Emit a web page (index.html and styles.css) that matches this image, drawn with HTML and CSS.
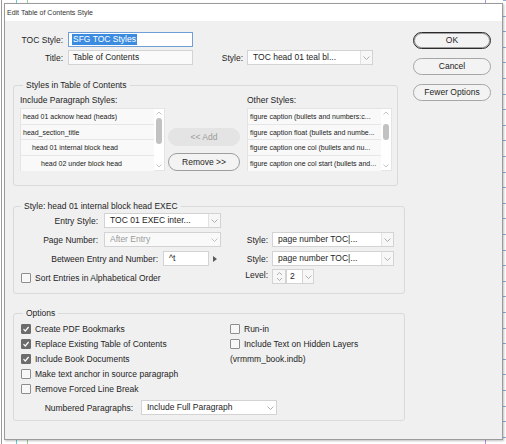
FILE: index.html
```html
<!DOCTYPE html>
<html lang="en">
<head>
  <meta charset="UTF-8">
  <title>Edit Table of Contents Style</title>
  <link rel="stylesheet" href="styles.css">
</head>
<body>
  <div class="dialog">
    <div class="dialog-title">Edit Table of Contents Style</div>
    <div class="dialog-body">
      <div class="main">
        <!-- top fields -->
        <div class="row">
          <span class="lbl lbl-top">TOC Style:</span>
          <div class="field field-focus"><span class="sel">SFG TOC Styles</span></div>
        </div>
        <div class="row row2">
          <span class="lbl lbl-top">Title:</span>
          <div class="field field-title">Table of Contents</div>
          <span class="lbl lbl-style">Style:</span>
          <div class="dd dd-title">
            <span class="dd-text">TOC head 01 teal bl...</span>
            <span class="dd-arrow"><svg width="7" height="4" viewBox="0 0 7 4"><path d="M0.5 0.5L3.5 3.5L6.5 0.5" fill="none" stroke="#9c9c9c" stroke-width="0.8"/></svg></span>
          </div>
        </div>

        <!-- styles in toc -->
        <fieldset class="group group-styles">
          <legend>Styles in Table of Contents</legend>
          <div class="lists">
            <div class="list-col">
              <div class="list-label">Include Paragraph Styles:</div>
              <div class="list">
                <div class="list-items">
                  <div class="item">head 01 acknow head (heads)</div>
                  <div class="item">head_section_title</div>
                  <div class="item indent1">head 01 internal block head</div>
                  <div class="item indent2">head 02 under block head</div>
                </div>
                <div class="scrollbar">
                  <svg class="sb-arrow" width="6" height="4" viewBox="0 0 6 4"><path d="M0.5 3.5L3 1L5.5 3.5" fill="none" stroke="#b5b5b5" stroke-width="0.8"/></svg>
                  <div class="thumb" style="margin-top: 3px; height: 26px;"></div>
                  <div class="sb-space"></div>
                  <svg class="sb-arrow" width="6" height="4" viewBox="0 0 6 4"><path d="M0.5 0.5L3 3L5.5 0.5" fill="none" stroke="#b5b5b5" stroke-width="0.8"/></svg>
                </div>
              </div>
            </div>
            <div class="list-buttons">
              <div class="btn btn-disabled">&lt;&lt; Add</div>
              <div class="btn">Remove &gt;&gt;</div>
            </div>
            <div class="list-col">
              <div class="list-label">Other Styles:</div>
              <div class="list">
                <div class="list-items">
                  <div class="item">figure caption (bullets and numbers:c...</div>
                  <div class="item">figure caption float (bullets and numbe...</div>
                  <div class="item">figure caption one col (bullets and nu...</div>
                  <div class="item">figure caption one col start (bullets and...</div>
                </div>
                <div class="scrollbar">
                  <svg class="sb-arrow" width="6" height="4" viewBox="0 0 6 4"><path d="M0.5 3.5L3 1L5.5 3.5" fill="none" stroke="#b5b5b5" stroke-width="0.8"/></svg>
                  <div class="thumb" style="margin-top: 9px; height: 16px;"></div>
                  <div class="sb-space"></div>
                  <svg class="sb-arrow" width="6" height="4" viewBox="0 0 6 4"><path d="M0.5 0.5L3 3L5.5 0.5" fill="none" stroke="#b5b5b5" stroke-width="0.8"/></svg>
                </div>
              </div>
            </div>
          </div>
        </fieldset>

        <!-- entry style -->
        <fieldset class="group group-entry">
          <legend>Style: head 01 internal block head EXEC</legend>
          <div class="entry-grid">
            <div class="cell">
              <span class="lbl lbl-entry">Entry Style:</span>
              <div class="dd dd-entry">
                <span class="dd-text">TOC 01 EXEC inter...</span>
                <span class="dd-arrow"><svg width="7" height="4" viewBox="0 0 7 4"><path d="M0.5 0.5L3.5 3.5L6.5 0.5" fill="none" stroke="#9c9c9c" stroke-width="0.8"/></svg></span>
              </div>
            </div>
            <div class="cell"></div>
            <div class="cell">
              <span class="lbl lbl-entry">Page Number:</span>
              <div class="dd dd-entry dd-disabled">
                <span class="dd-text">After Entry</span>
                <span class="dd-arrow"><svg width="7" height="4" viewBox="0 0 7 4"><path d="M0.5 0.5L3.5 3.5L6.5 0.5" fill="none" stroke="#b5b5b5" stroke-width="0.8"/></svg></span>
              </div>
            </div>
            <div class="cell">
              <span class="lbl lbl-right">Style:</span>
              <div class="dd dd-right">
                <span class="dd-text">page number TOC|...</span>
                <span class="dd-arrow"><svg width="7" height="4" viewBox="0 0 7 4"><path d="M0.5 0.5L3.5 3.5L6.5 0.5" fill="none" stroke="#9c9c9c" stroke-width="0.8"/></svg></span>
              </div>
            </div>
            <div class="cell">
              <span class="lbl lbl-between">Between Entry and Number:</span>
              <div class="field field-between">^t</div>
              <span class="tri"></span>
            </div>
            <div class="cell">
              <span class="lbl lbl-right">Style:</span>
              <div class="dd dd-right">
                <span class="dd-text">page number TOC|...</span>
                <span class="dd-arrow"><svg width="7" height="4" viewBox="0 0 7 4"><path d="M0.5 0.5L3.5 3.5L6.5 0.5" fill="none" stroke="#9c9c9c" stroke-width="0.8"/></svg></span>
              </div>
            </div>
            <div class="cell">
              <span class="check"><span class="box"></span>Sort Entries in Alphabetical Order</span>
            </div>
            <div class="cell cell-level">
              <span class="lbl lbl-right">Level:</span>
              <div class="spinner">
                <span class="spin-btns">
                  <svg width="7" height="11" viewBox="0 0 7 11"><path d="M1 4L3.5 1.5L6 4M1 7L3.5 9.5L6 7" fill="none" stroke="#9c9c9c" stroke-width="0.8"/></svg>
                </span>
                <span class="spin-val">2</span>
                <span class="dd-arrow"><svg width="7" height="4" viewBox="0 0 7 4"><path d="M0.5 0.5L3.5 3.5L6.5 0.5" fill="none" stroke="#9c9c9c" stroke-width="0.8"/></svg></span>
              </div>
            </div>
          </div>
        </fieldset>

        <!-- options -->
        <fieldset class="group group-options">
          <legend>Options</legend>
          <div class="opt-cols">
            <div class="opt-col opt-left">
              <span class="check"><span class="box checked"><svg width="8" height="8" viewBox="0 0 8 8"><path d="M1.5 4.2L3.3 6L6.6 2" fill="none" stroke="#fff" stroke-width="1.2"/></svg></span>Create PDF Bookmarks</span>
              <span class="check"><span class="box checked"><svg width="8" height="8" viewBox="0 0 8 8"><path d="M1.5 4.2L3.3 6L6.6 2" fill="none" stroke="#fff" stroke-width="1.2"/></svg></span>Replace Existing Table of Contents</span>
              <span class="check"><span class="box checked"><svg width="8" height="8" viewBox="0 0 8 8"><path d="M1.5 4.2L3.3 6L6.6 2" fill="none" stroke="#fff" stroke-width="1.2"/></svg></span>Include Book Documents</span>
              <span class="check"><span class="box"></span>Make text anchor in source paragraph</span>
              <span class="check"><span class="box"></span>Remove Forced Line Break</span>
            </div>
            <div class="opt-col opt-right">
              <span class="check"><span class="box"></span>Run-in</span>
              <span class="check"><span class="box"></span>Include Text on Hidden Layers</span>
              <span class="book">(vrmmm_book.indb)</span>
            </div>
          </div>
          <div class="row row-numbered">
            <span class="lbl lbl-numbered">Numbered Paragraphs:</span>
            <div class="dd dd-numbered">
              <span class="dd-text">Include Full Paragraph</span>
              <span class="dd-arrow dd-arrow-plain"><svg width="7" height="4" viewBox="0 0 7 4"><path d="M0.5 0.5L3.5 3.5L6.5 0.5" fill="none" stroke="#9c9c9c" stroke-width="0.8"/></svg></span>
            </div>
          </div>
        </fieldset>
      </div>

      <!-- buttons -->
      <div class="side">
        <div class="btn btn-side btn-default">OK</div>
        <div class="btn btn-side">Cancel</div>
        <div class="btn btn-side">Fewer Options</div>
      </div>
    </div>
  </div>
</body>
</html>
```

FILE: styles.css
```css
* {
  margin: 0;
  padding: 0;
  box-sizing: border-box;
}
body {
  width: 506px;
  height: 444px;
  overflow: hidden;
  font-family: "Liberation Sans", Arial, sans-serif;
  font-size: 8.5px;
  color: #1e1e1e;
  background:
    linear-gradient(#9a9a9a, #9a9a9a) 1px 0 / 1px 100% no-repeat,
    linear-gradient(#62cfd6, #62cfd6) 16px 0 / 1px 100% no-repeat,
    linear-gradient(#93d293, #93d293) 27px 0 / 1px 100% no-repeat,
    linear-gradient(#b68fd8, #b68fd8) 485px 0 / 1px 100% no-repeat,
    repeating-linear-gradient(#8fb0dc 0 1px, transparent 1px 15.6px) right top / 3px 100% no-repeat,
    #fff;
}

/* 对话框外框 */
.dialog {
  margin: 3px 0 0 4px;
  width: 499px;
  height: 437px;
  border: 1px solid #9b9b9b;
  background: #f0f0f0;
  box-shadow: 1px 1px 2px rgba(0, 0, 0, 0.25);
}
.dialog-title {
  height: 17px;
  padding-left: 2px;
  background: #fff;
  font-size: 7px;
  line-height: 17px;
  color: #333;
}
.dialog-body {
  display: flex;
  padding: 11px 11px 0 8px;
}
.main {
  width: 392px;
}
.side {
  display: flex;
  flex-direction: column;
  gap: 9px;
  width: 78px;
  margin-left: 8px;
}

/* 通用行、标签 */
.row {
  display: flex;
  align-items: center;
  height: 15px;
}
.row2 {
  margin-top: 3px;
}
.lbl {
  flex: none;
  text-align: right;
  white-space: nowrap;
}
.lbl-top {
  width: 50px;
  margin-right: 5px;
}
.lbl-style {
  width: 54px;
  padding-right: 4px;
}

/* 输入框 */
.field {
  height: 15px;
  border: 1px solid #d3d3d3;
  background: #fafafa;
  line-height: 13px;
  padding-left: 4px;
  white-space: nowrap;
  overflow: hidden;
}
.field-focus {
  width: 125px;
  border-color: #6f9fd6;
  background: #fff;
  padding-left: 3px;
}
.field-title {
  width: 125px;
}
.sel {
  display: inline-block;
  background: #3b8ce0;
  color: #fff;
  line-height: 11px;
  padding: 0 1px;
}

/* 下拉框 */
.dd {
  display: flex;
  height: 15px;
  border: 1px solid #d3d3d3;
  background: #fff;
}
.dd-text {
  flex: 1;
  padding-left: 5px;
  line-height: 13px;
  white-space: nowrap;
  overflow: hidden;
}
.dd-arrow {
  display: flex;
  align-items: center;
  justify-content: center;
  width: 12px;
  border-left: 1px solid #e2e2e2;
  background: #f7f7f7;
}
.dd-arrow-plain {
  border-left: none;
  background: none;
}
.dd-title {
  width: 126px;
}
.dd-entry {
  width: 117px;
}
.dd-disabled {
  background: #f9f9f9;
  color: #9a9a9a;
}
.dd-disabled .dd-arrow {
  border-left: none;
  background: none;
}
.dd-right {
  width: 122px;
}
.dd-numbered {
  width: 136px;
}

/* 分组框 */
.group {
  min-width: 0;
  border: 1px solid #dadada;
  border-radius: 3px;
  padding: 0 5px 0 6px;
}
.group legend {
  height: 12px;
  line-height: 12px;
  margin-left: 3px;
  padding: 0 3px;
}
.group-styles {
  width: 385px;
  margin-top: 14px;
  padding-top: 4px;
  padding-bottom: 14px;
}
.group-entry {
  margin-top: 14px;
  padding-top: 1px;
  padding-bottom: 8px;
}
.group-entry legend {
  margin-left: 1px;
}
.group-options {
  margin-top: 13px;
  padding-top: 2px;
  padding-bottom: 5px;
}

/* 列表 */
.lists {
  display: flex;
}
.list-col {
  width: 145px;
}
.list-label {
  line-height: 11px;
  margin-bottom: 2px;
}
.list {
  display: flex;
  height: 63px;
  border: 1px solid #e4e4e4;
  background: #fff;
}
.list-items {
  flex: 1;
  min-width: 0;
}
.item {
  height: 15.5px;
  line-height: 15px;
  padding-left: 2px;
  border-bottom: 1px solid #e6e6e6;
  background: #f9f9f9;
  font-size: 7px;
  color: #222;
  white-space: nowrap;
  overflow: hidden;
}
.item:last-child {
  border-bottom: none;
}
.indent1 {
  padding-left: 11px;
}
.indent2 {
  padding-left: 20px;
}
.scrollbar {
  display: flex;
  flex-direction: column;
  align-items: center;
  width: 10px;
  padding: 2px 0 2px;
  background: #fff;
}
.sb-arrow {
  flex: none;
}
.thumb {
  width: 6px;
  border-radius: 3px;
  background: #c2c2c2;
}
.sb-space {
  flex: 1;
}
.list-buttons {
  display: flex;
  flex-direction: column;
  justify-content: flex-end;
  gap: 7px;
  width: 72px;
  margin: 0 7px 0 3px;
}

/* 按钮 */
.btn {
  height: 18px;
  line-height: 16px;
  border: 1px solid #9d9d9d;
  border-radius: 9px;
  background: #f3f3f3;
  text-align: center;
  white-space: nowrap;
}
.btn-disabled {
  border-color: #e4e4e4;
  background: #e4e4e4;
  color: #9b9b9b;
}
.btn-side {
  height: 17px;
  line-height: 15px;
  border-color: #a6a6a6;
}
.btn-default {
  border-color: #2b2b2b;
  box-shadow: inset 0 0 0 1px rgba(0, 0, 0, 0.35);
}

/* 条目样式网格 */
.entry-grid {
  display: grid;
  grid-template-columns: 225px 1fr;
  grid-auto-rows: 15px;
  row-gap: 4px;
}
.cell {
  display: flex;
  align-items: center;
}
.lbl-entry {
  width: 78px;
  margin-right: 6px;
}
.lbl-between {
  width: 138px;
  margin-right: 5px;
}
.field-between {
  width: 46px;
  background: #fff;
  padding-left: 5px;
}
.tri {
  margin-left: 4px;
  border-left: 4px solid #5a5a5a;
  border-top: 3px solid transparent;
  border-bottom: 3px solid transparent;
}
.lbl-right {
  width: 27px;
  padding-right: 4px;
}
.cell-level {
  align-items: flex-start;
}
.spinner {
  display: flex;
  height: 15px;
  margin-top: -1px;
}
.spin-btns {
  display: flex;
  align-items: center;
  justify-content: center;
  width: 14px;
  border: 1px solid #d3d3d3;
  background: #f7f7f7;
}
.spin-val {
  width: 16px;
  padding-left: 3px;
  line-height: 13px;
  border: 1px solid #d3d3d3;
  border-right: none;
  background: #fff;
}
.spinner .dd-arrow {
  width: 12px;
  border: 1px solid #d3d3d3;
}

/* 复选框 */
.check {
  display: flex;
  align-items: center;
  height: 15px;
  white-space: nowrap;
}
.box {
  display: flex;
  align-items: center;
  justify-content: center;
  flex: none;
  width: 10px;
  height: 10px;
  margin: 0 4px 0 1px;
  border: 1px solid #8e8e8e;
  border-radius: 1px;
  background: #f7f7f7;
}
.box.checked {
  border-color: #6c6c6c;
  background: #6c6c6c;
}

/* 选项 */
.opt-cols {
  display: flex;
}
.opt-col {
  display: flex;
  flex-direction: column;
}
.opt-left {
  width: 209px;
}
.book {
  height: 15px;
  line-height: 17px;
  padding-left: 1px;
}
.row-numbered {
  margin-top: 4px;
}
.lbl-numbered {
  width: 113px;
  margin-right: 8px;
}
```
